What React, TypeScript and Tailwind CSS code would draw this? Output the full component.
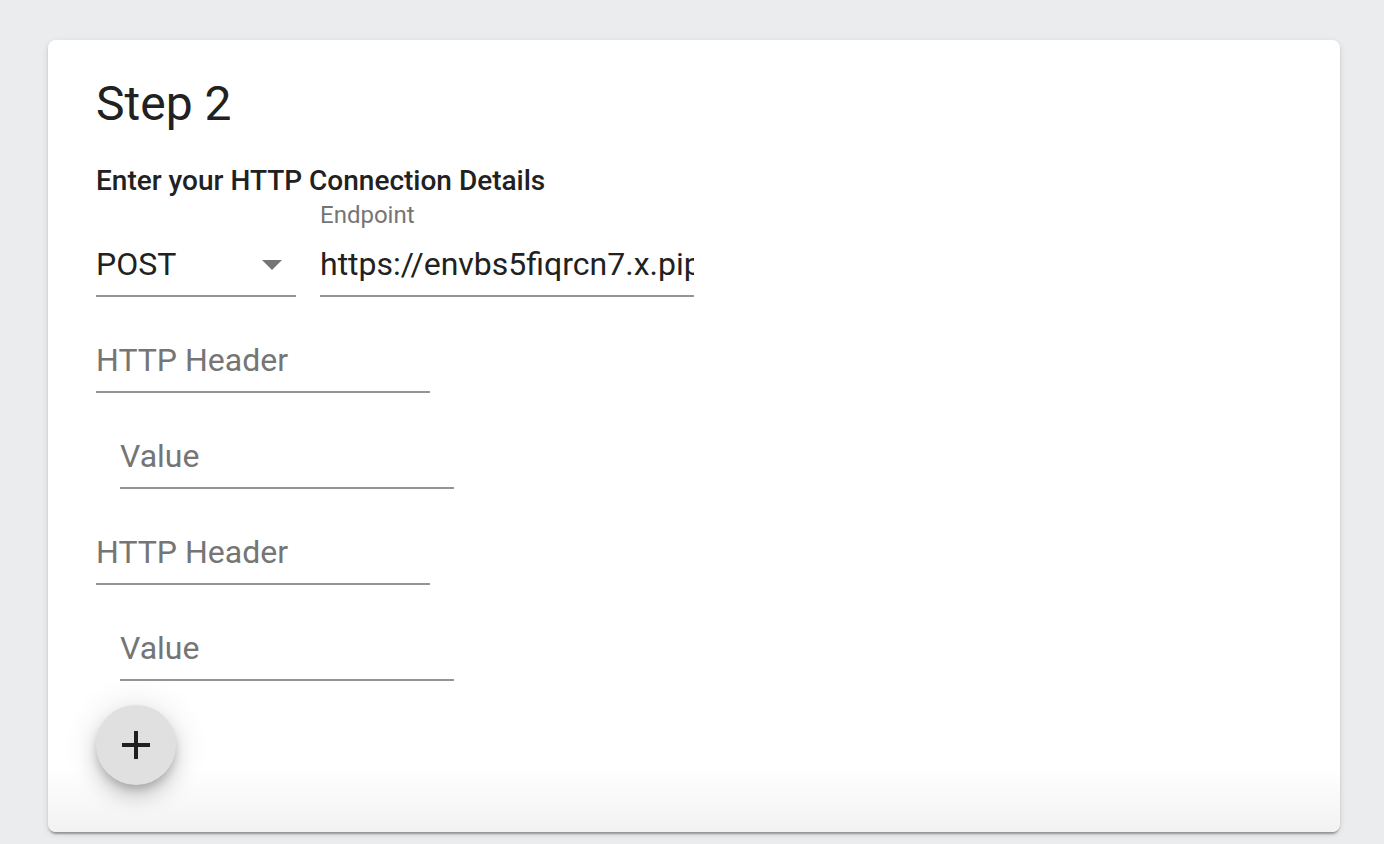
import React from "react";

function HeaderField({ label, indent }: { label: string; indent?: boolean }) {
  return (
    <div className={`flex flex-col pt-[32px] ${indent ? "pl-6" : ""}`}>
      <div className="w-[334px] h-[64px] border-b-2 border-[#949494] pt-[12px] pb-[14px]">
        <div className="text-[32px] leading-[38px] text-[#757575]">{label}</div>
      </div>
    </div>
  );
}

export default function App() {
  return (
    <div
      className="min-h-screen bg-[#ebecee] pt-10 pl-12 pb-3"
      style={{ fontFamily: "Roboto, 'Noto Sans', Arial, sans-serif" }}
    >
      <div className="w-[1292px] h-[792px] rounded-lg bg-[linear-gradient(to_bottom,#ffffff_0,#ffffff_728px,#f2f2f2_100%)] shadow-[0_4px_2px_-2px_rgba(0,0,0,0.2),0_2px_2px_0_rgba(0,0,0,0.14),0_2px_6px_0_rgba(0,0,0,0.12)] px-12 pt-[36px]">
        <h1 className="text-[48px] leading-[56px] font-normal text-[#212121]">Step 2</h1>
        <div className="mt-[27px] text-[28px] leading-[44px] font-medium text-[#212121]">
          Enter your HTTP Connection Details
        </div>
        <div className="flex items-end gap-6">
          <div className="w-[200px] h-[64px] border-b-2 border-[#949494] pt-[12px] pb-[14px] flex items-start justify-between">
            <span className="text-[32px] leading-[38px] text-[#212121]">POST</span>
            <svg width="20" height="10" viewBox="0 0 20 10" className="mt-[15px] mr-[14px]">
              <path d="M0 0h20L10 10z" fill="#757575" />
            </svg>
          </div>
          <div className="flex flex-col">
            <div className="h-[30px] text-[24px] leading-[24px] text-[#757575]">Endpoint</div>
            <div className="w-[374px] h-[64px] border-b-2 border-[#949494] pt-[12px] pb-[14px] overflow-hidden">
              <div className="text-[32px] leading-[38px] text-[#212121] whitespace-nowrap">
                https://envbs5fiqrcn7.x.pipedream.net
              </div>
            </div>
          </div>
        </div>
        <HeaderField label="HTTP Header" />
        <HeaderField label="Value" indent />
        <HeaderField label="HTTP Header" />
        <HeaderField label="Value" indent />
        <button className="mt-[24px] w-20 h-20 rounded-full bg-[#e0e0e0] flex items-center justify-center shadow-[0_6px_10px_-2px_rgba(0,0,0,0.2),0_12px_20px_0_rgba(0,0,0,0.14),0_2px_36px_0_rgba(0,0,0,0.12)]">
          <svg width="48" height="48" viewBox="0 0 24 24">
            <path d="M19 13h-6v6h-2v-6H5v-2h6V5h2v6h6v2z" fill="#1f1f1f" />
          </svg>
        </button>
      </div>
    </div>
  );
}
